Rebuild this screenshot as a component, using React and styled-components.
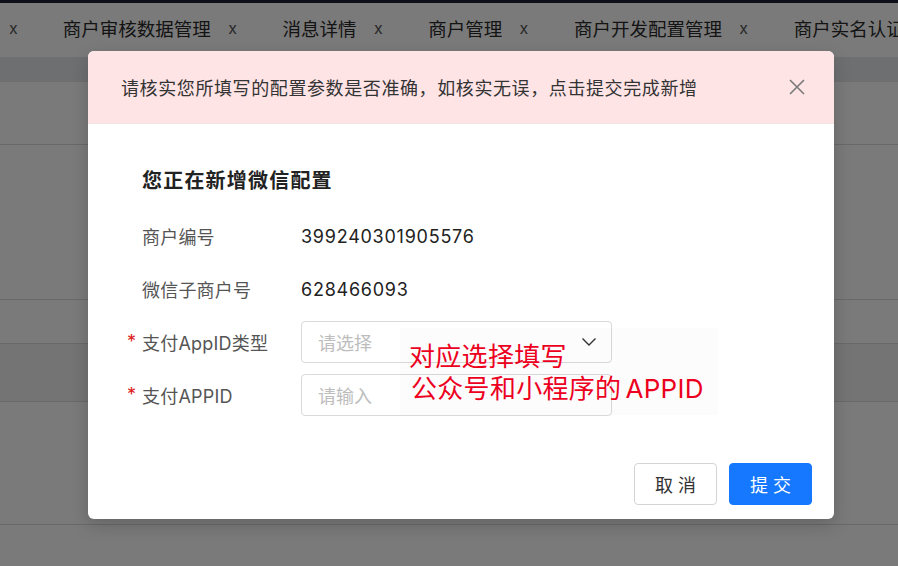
import React from "react";
import styled, { createGlobalStyle } from "styled-components";

const Global = createGlobalStyle`
  html, body { margin: 0; padding: 0; }
  body {
    width: 898px; height: 566px; overflow: hidden;
    font-family: "Inter", "Noto Sans CJK SC", sans-serif;
    background: #fff;
  }
`;

const Page = styled.div`
  width: 898px; height: 566px; position: relative; overflow: hidden;
  display: flex; flex-direction: column; background: #fff;
`;
const TopBar = styled.div`height: 3px; background: #1c2036; flex: none;`;
const Tabs = styled.div`
  height: 54px; flex: none; display: flex; align-items: center; background: #fff;
  white-space: nowrap; padding: 0 0 5px 9px; box-sizing: border-box; overflow: hidden;
`;
const Tab = styled.div`
  display: flex; align-items: center; flex: none;
  font-family: "Noto Sans CJK SC", sans-serif; font-size: 18.5px; color: #2a2a2a;
  margin-right: ${p => p.$first ? 45 : 45.6}px;
`;
const TabClose = styled.span`
  font-family: "Inter", sans-serif; font-size: 16px; color: #555; margin-left: ${p => p.$first ? 0 : 17.4}px;
`;
const Strip = styled.div`height: 25px; flex: none; background: #e6e9ed;`;
const Row = styled.div`
  height: ${p => p.$h}px; flex: none; background: ${p => p.$bg || "#fff"};
  border-bottom: 1px solid #dcdcdc;
`;

const Mask = styled.div`position: absolute; inset: 0; background: rgba(0,0,0,0.52);`;

const Modal = styled.div`
  position: absolute; left: 88px; top: 51px; width: 746px; height: 468px;
  background: #fff; border-radius: 6px; overflow: hidden;
  box-shadow: 0 6px 18px rgba(0,0,0,0.18);
  display: flex; flex-direction: column;
`;
const Header = styled.div`
  height: 72px; flex: none; background: #ffe4e6; border-bottom: 1px solid #f1e4e6;
  display: flex; align-items: center; justify-content: space-between;
  padding: 0 28px 0 33px;
  font-family: "Noto Sans CJK SC", sans-serif; font-size: 18px; letter-spacing: 0.6px; color: #333;
`;
const CloseBtn = styled.svg`width: 18px; height: 18px; flex: none;`;

const Body = styled.div`
  flex: 1; display: flex; flex-direction: column; padding: 42px 22px 14px 54px; position: relative;
`;
const Title = styled.div`
  font-family: "Noto Sans CJK SC", sans-serif; font-weight: 700; font-size: 20px; line-height: 28px;
  color: #222; letter-spacing: 1.2px; margin-bottom: 21px;
`;
const Form = styled.div`display: flex; flex-direction: column; gap: 11px;`;
const FormRow = styled.div`display: flex; align-items: center; height: 42px;`;
const Label = styled.div`
  width: 159px; flex: none; position: relative; font-size: 18px; color: #555;
  font-family: "Inter", "Noto Sans CJK SC", sans-serif; letter-spacing: 0.2px;
  &::before {
    content: ${p => p.$req ? '"*"' : '""'};
    position: absolute; left: -15px; top: 2px; color: #e02020; font-size: 18px;
  }
`;
const Value = styled.div`font-size: 18px; color: #222; font-family: "Inter", sans-serif; letter-spacing: 0.75px;`;
const Field = styled.div`
  width: 311px; height: 42px; box-sizing: border-box; border: 1px solid #d9d9d9; border-radius: 4px;
  display: flex; align-items: center; justify-content: space-between; padding: 0 14px 0 16px;
  font-family: "Noto Sans CJK SC", sans-serif; font-size: 18px; color: #bdbdbd;
`;
const Chevron = styled.svg`width: 16px; height: 16px;`;

const Footer = styled.div`
  margin-top: auto; display: flex; justify-content: flex-end; gap: 12px;
`;
const Button = styled.button`
  width: 83px; height: 42px; border-radius: 4px; box-sizing: border-box; cursor: pointer;
  font-family: "Noto Sans CJK SC", sans-serif; font-size: 18px; letter-spacing: 5px; padding: 0 0 0 5px;
  border: 1px solid ${p => p.$primary ? "#1677ff" : "#d4d4d4"};
  background: ${p => p.$primary ? "#1677ff" : "#fff"};
  color: ${p => p.$primary ? "#fff" : "#333"};
`;

const Note = styled.div`
  position: absolute; left: 312px; top: 204px; width: 318px; height: 87px;
  background: rgba(0,0,0,0.01); box-sizing: border-box; padding: 12.5px 0 0 9px;
  font-family: "Inter", "Noto Sans CJK SC", sans-serif; font-size: 26px; line-height: 32px; color: #ec001e;
  letter-spacing: 0.3px; pointer-events: none;
`;
const NoteLine = styled.div`padding-left: ${p => p.$indent || 0}px; white-space: nowrap;`;
const Gap = styled.span`margin-right: ${p => p.$w}px;`;

const tabs = ["商户审核数据管理", "消息详情", "商户管理", "商户开发配置管理", "商户实名认证"];

export default function App() {
  return (
    <Page>
      <Global />
      <TopBar />
      <Tabs>
        <Tab $first><TabClose $first>x</TabClose></Tab>
        {tabs.map((t, i) => (
          <Tab key={t}>{t}{i < tabs.length - 1 && <TabClose>x</TabClose>}</Tab>
        ))}
      </Tabs>
      <Strip />
      <Row $h={62} />
      <Row $h={154} />
      <Row $h={43} />
      <Row $h={57} $bg="#f3f3f3" />
      <Row $h={122} />
      <Mask />
      <Modal>
        <Header>
          <span>请核实您所填写的配置参数是否准确，如核实无误，点击提交完成新增</span>
          <CloseBtn viewBox="0 0 18 18">
            <path d="M2 2 L16 16 M16 2 L2 16" stroke="#7a7a7a" strokeWidth="1.6" fill="none" />
          </CloseBtn>
        </Header>
        <Body>
          <Title>您正在新增微信配置</Title>
          <Form>
            <FormRow><Label>商户编号</Label><Value>399240301905576</Value></FormRow>
            <FormRow><Label>微信子商户号</Label><Value>628466093</Value></FormRow>
            <FormRow>
              <Label $req>支付AppID类型</Label>
              <Field>
                <span>请选择</span>
                <Chevron viewBox="0 0 16 16">
                  <polyline points="1.5,4.5 8,11 14.5,4.5" stroke="#333" strokeWidth="1.4" fill="none" />
                </Chevron>
              </Field>
            </FormRow>
            <FormRow>
              <Label $req>支付APPID</Label>
              <Field><span>请输入</span></Field>
            </FormRow>
          </Form>
          <Footer>
            <Button>取消</Button>
            <Button $primary>提交</Button>
          </Footer>
          <Note>
            <NoteLine>对应选择填写</NoteLine>
            <NoteLine $indent={2}>公众号和小程序的<Gap $w={4} />APPID</NoteLine>
          </Note>
        </Body>
      </Modal>
    </Page>
  );
}
